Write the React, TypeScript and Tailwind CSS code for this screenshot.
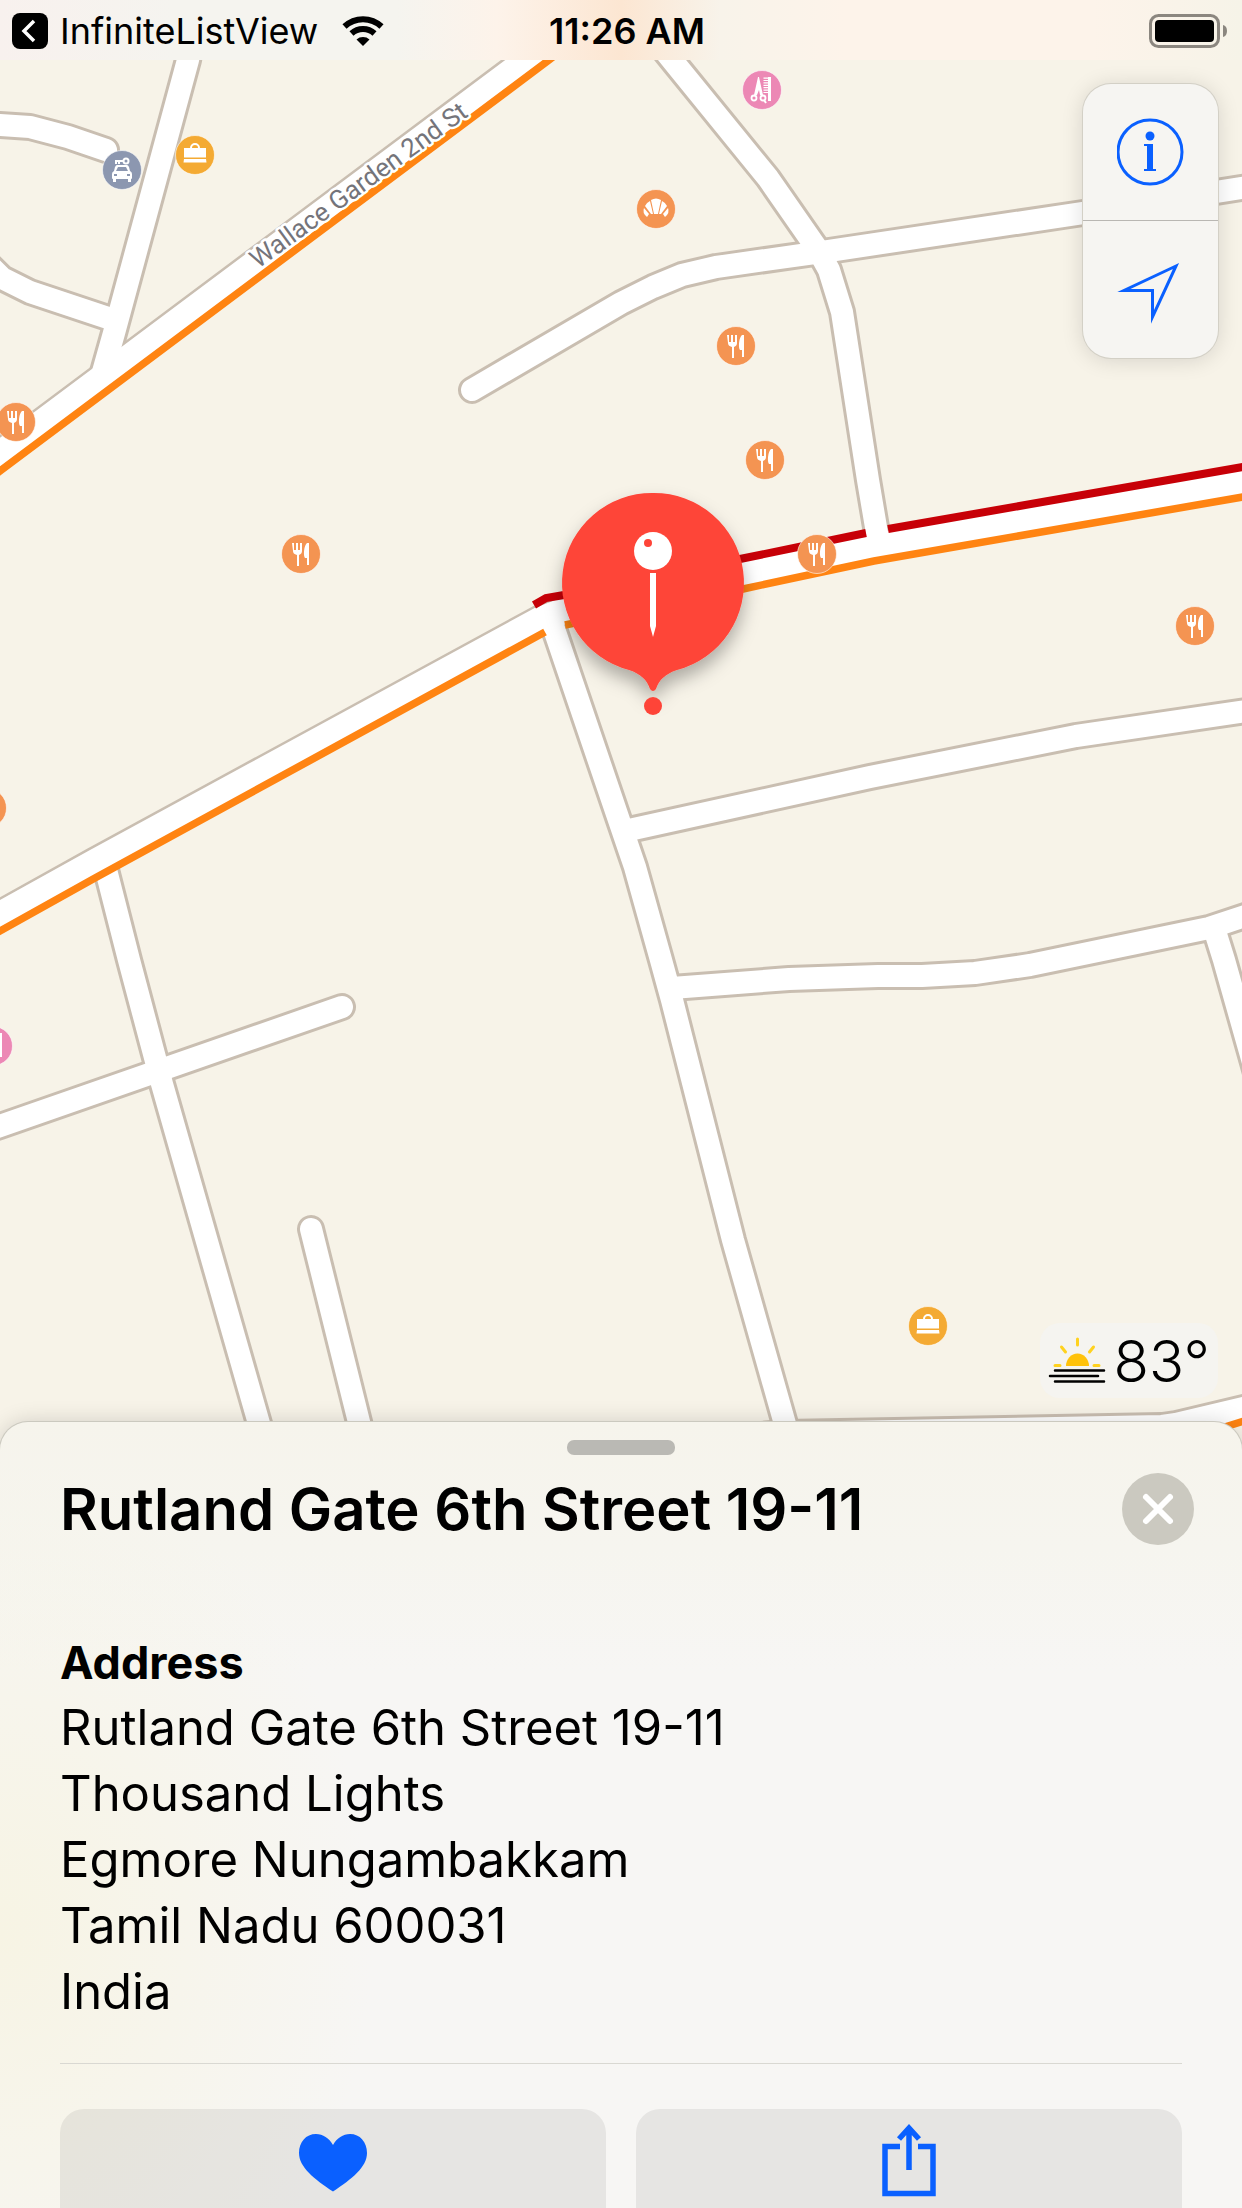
import type { ReactNode } from "react";

const MINOR_ROADS = [
  "M192 40 L188 60 L114 333 L103 372",
  "M-20 124 L0 125 L30 127 L68 137 L106 150",
  "M-14 262 L2 278 L30 292 L108 318",
  "M472 390 L621 303 L653 287 L682 275 L716 267 L822 252 L1083 213 L1260 185",
  "M656 40 L672 60 L768 178 L818 250 L829 270 L842 312 L868 480 L879 545",
  "M551 620 L621 826 L635 867 L661 960 L672 1000 L733 1240 L785 1424 L790 1450",
  "M629 830 L870 777 L1076 736 L1260 709",
  "M672 988 L789 979 L878 976 L922 976 L975 973 L1030 965 L1209 928 L1260 911",
  "M1214 928 L1224 960 L1258 1080",
  "M104 862 L129 960 L162 1084 L262 1434",
  "M-20 1133 L0 1126 L342 1007",
  "M311 1229 L362 1434",
  "M700 1440 L785 1433 L1162 1426 L1176 1424 L1260 1404",
];

const MAIN_ROADS = [
  "M-20 469 L0 454 L527 60 L560 35",
  "M-20 926 L0 915 L95 862 L540 620 L566 610 L743 574 L870 547 L1260 479",
];

type PoiKind = "food" | "bag" | "salon" | "bakery" | "car";

const POIS: { kind: PoiKind; x: number; y: number }[] = [
  { kind: "car", x: 122, y: 170 },
  { kind: "bag", x: 195, y: 155 },
  { kind: "food", x: 16, y: 422 },
  { kind: "salon", x: 762, y: 90 },
  { kind: "bakery", x: 656, y: 209 },
  { kind: "food", x: 736, y: 346 },
  { kind: "food", x: 765, y: 460 },
  { kind: "food", x: 301, y: 554 },
  { kind: "food", x: 817, y: 554 },
  { kind: "food", x: 1195, y: 626 },
  { kind: "food", x: -13, y: 808 },
  { kind: "salon", x: -7, y: 1046 },
  { kind: "bag", x: 928, y: 1326 },
];

const POI_COLORS: Record<PoiKind, string> = {
  food: "#f49452",
  bakery: "#f49452",
  bag: "#f4aa33",
  salon: "#ec88b5",
  car: "#8c97b0",
};

const POI_GLYPHS: Record<PoiKind, ReactNode> = {
  food: (
    <g fill="#fff">
      <path d="M-9-11h2v7h2v-7h2v7h2v-7h2v8c0 2-1 3-3 4v11h-2v-11c-3-1-4-2-4-4z" />
      <path d="M8-11V11H6V4H4C2 2 3-9 6-11z" />
    </g>
  ),
  bag: (
    <g fill="#fff">
      <path d="M-11-7h22v9.500h-22zM-11 4h22l.5 3.500h-23z" />
      <path d="M-4-6v-1a4 4 0 0 1 8 0v1" fill="none" stroke="#fff" strokeWidth="2" />
    </g>
  ),
  salon: (
    <g fill="none" stroke="#fff">
      <path d="M-4-13h1L1 5H-2L-3 0-5 5H-8z" fill="#fff" stroke="none" />
      <circle cx="-8" cy="8" r="2.500" strokeWidth="1.800" />
      <circle cx="1" cy="8" r="2.500" strokeWidth="1.800" />
      <path d="M2 10l2 3" strokeWidth="2" />
      <path d="M7.500-13v24" strokeWidth="3" />
      <path d="M4-12.500V3" strokeWidth="5" strokeDasharray="1.200 1.200" />
    </g>
  ),
  bakery: (
    <g fill="#fff">
      <path d="M-5-9q5-3 10 0L2 5h-4z" />
      <path d="M-6-8-3 5h-2L-11-3q1-3 5-5z" />
      <path d="M6-8 3 5h2L11-3q-1-3-5-5z" />
      <path d="M-12-1-7 5l-2 3q-5-4-3-9z" />
      <path d="M12-1 7 5l2 3q5-4 3-9z" />
    </g>
  ),
  car: (
    <g fill="#fff">
      <path
        fillRule="evenodd"
        d="M-5-5H5q1 0 2 2l1 4q2 1 2 3v4q0 1-1 1v3H6V9H-6v3h-3V9q-1 0-1-1V4q0-2 2-3l1-4q1-2 2-2zM-4-3-6 1H6L4-3zM-8 4v2h3V4zM5 4v2h3V4z"
      />
      <path d="M-7-10H2v2H-2v2h-2v-2h-1v2h-2z" />
      <circle cx="4" cy="-9" r="2.500" fill="none" stroke="#fff" strokeWidth="2" />
    </g>
  ),
};

function MapCanvas() {
  return (
    <svg
      className="absolute inset-0 h-full w-full"
      viewBox="0 0 1242 2208"
      preserveAspectRatio="xMidYMin slice"
      role="img"
      aria-label="Map of Rutland Gate 6th Street"
    >
      <defs>
        <filter id="pin-shadow" x="-40%" y="-40%" width="180%" height="180%">
          <feDropShadow dx="0" dy="10" stdDeviation="9" floodColor="#000" floodOpacity="0.3" />
        </filter>
      </defs>
      <rect width="1242" height="2208" fill="#f7f3e8" />
      <g fill="none" strokeLinecap="round" strokeLinejoin="round">
        <g stroke="#c9beb1" strokeWidth="28">
          {MINOR_ROADS.map((d) => (
            <path key={d} d={d} />
          ))}
        </g>
        <g stroke="#c9beb1" strokeWidth="31">
          {MAIN_ROADS.map((d) => (
            <path key={d} d={d} />
          ))}
        </g>
        <g stroke="#fff" strokeWidth="26">
          {MAIN_ROADS.map((d) => (
            <path key={d} d={d} />
          ))}
        </g>
        <g stroke="#fff" strokeWidth="22">
          {MINOR_ROADS.map((d) => (
            <path key={d} d={d} />
          ))}
        </g>
      </g>
      <g fill="none" stroke="#ff8412" strokeWidth="7.500">
        <path d="M-20 486 L0 471 L549 60 L575 40" />
        <path d="M-20 942 L0 931 L95 878 L545 632" />
        <path d="M565 625 L743 589 L874 561 L1260 494" />
        <path d="M1196 1436 L1260 1416" />
      </g>
      <g fill="none" stroke="#c70007" strokeWidth="8">
        <path d="M534 605 L546 598 L564 595 L740 559 L866 533" />
        <path d="M888 529 L1260 464" />
      </g>
      <text
        transform="translate(258 269) rotate(-36)"
        fontFamily="Roboto, sans-serif"
        fontSize="26"
        fill="#74747a"
        stroke="#fff"
        strokeWidth="5"
        strokeLinejoin="round"
        paintOrder="stroke"
      >
        Wallace Garden 2nd St
      </text>
      {POIS.map(({ kind, x, y }) => (
        <g key={`${x}-${y}`} transform={`translate(${x} ${y})`}>
          <circle r="19.500" fill={POI_COLORS[kind]} stroke="#fff" strokeOpacity="0.6" />
          {POI_GLYPHS[kind]}
        </g>
      ))}
      <path
        filter="url(#pin-shadow)"
        fill="#fe4438"
        d="M653 493a90 90 0 0 1 24 177c-12 4-18 10-21 19q-3 4-6 0c-3-9-9-15-21-19A90 90 0 0 1 653 493z"
      />
      <circle cx="653" cy="706" r="9" fill="#fe4438" />
      <circle cx="653" cy="551" r="19" fill="#fff" />
      <circle cx="648" cy="543" r="4" fill="#fe4438" />
      <path d="M650 573h6v53l-3 11-3-11z" fill="#fff" />
    </svg>
  );
}

function StatusBar() {
  return (
    <header className="relative grid h-[60px] shrink-0 grid-cols-[1fr_auto_1fr] items-center bg-[linear-gradient(90deg,#f8f1ee_0%,#f5f4ef_14%,#f5f4ef_32%,#fdf3ea_40%,#fce6d2_50%,#f8f3ea_58%,#fdf3ea_68%,#fdf3ea_88%,#f6f3e8_100%)] pl-3 pt-[2px] text-[36px] leading-[44px]">
      <button type="button" className="flex items-center gap-3 justify-self-start whitespace-nowrap">
        <svg className="h-9 w-9" viewBox="0 0 36 36" aria-hidden="true">
          <rect width="36" height="36" rx="8" fill="#000" />
          <path d="M22 8 12 18l10 10" fill="none" stroke="#fff" strokeWidth="3.500" />
        </svg>
        <span>InfiniteListView</span>
        <svg className="ml-3 h-8 w-[42px]" viewBox="0 0 42 32" aria-hidden="true">
          <g fill="none" stroke="#000" strokeWidth="6">
            <path d="M2.500 11.500a27 27 0 0 1 37 0" />
            <path d="M9.500 18.500a17 17 0 0 1 23 0" />
          </g>
          <path d="M14.500 24.500a10 10 0 0 1 13 0L21 31z" />
        </svg>
      </button>
      <time className="font-semibold">11:26 AM</time>
      <svg className="mr-[15px] h-[34px] w-[78px] justify-self-end" viewBox="0 0 78 34" role="img" aria-label="Battery full">
        <rect x="1.500" y="1.500" width="68" height="31" rx="8" fill="none" stroke="#8b867f" strokeWidth="3" />
        <rect x="6" y="6" width="59" height="22" rx="4" />
        <path d="M74 11q4 1 4 6t-4 6z" fill="#8b867f" />
      </svg>
    </header>
  );
}

function MapControls() {
  return (
    <div className="flex w-[135px] flex-col divide-y divide-[#b9b7b3] rounded-[28px] bg-[#f6f5f2] shadow-[0_0_0_1px_#d3d0c6,0_2px_22px_rgba(0,0,0,0.14)]">
      <button type="button" aria-label="Map settings" className="flex h-[137px] items-center justify-center">
        <svg className="h-[68px] w-[68px]" viewBox="0 0 68 68" fill="#0a60ff" aria-hidden="true">
          <circle cx="33" cy="34" r="32" fill="none" stroke="#0a60ff" strokeWidth="3" />
          <circle cx="33" cy="18" r="4.500" />
          <path d="M27 26h9v25h3v2H27v-2h3V28h-3z" />
        </svg>
      </button>
      <button type="button" aria-label="Show my location" className="flex h-[137px] items-center justify-center">
        <svg className="h-[68px] w-[68px]" viewBox="0 0 68 68" aria-hidden="true">
          <path d="M59 10 7 34.500H35.500V61z" fill="none" stroke="#0a60ff" strokeWidth="3" strokeMiterlimit="10" />
        </svg>
      </button>
    </div>
  );
}

function Weather() {
  return (
    <div className="flex h-[75px] items-center gap-2 rounded-[20px] bg-[#f5f4f0] px-2">
      <svg className="h-[50px] w-[58px]" viewBox="1 0 58 50" role="img" aria-label="Sunset">
        <path d="M19 30a11.500 12.500 0 0 1 23 0z" fill="#ffc20a" />
        <path
          d="M30.500 3v6M14.500 11l4 5M46.500 11l-4 5M8 29.500h5M47 29.500h5"
          stroke="#ffd21f"
          strokeWidth="3"
          strokeLinecap="round"
        />
        <path d="M8 34.500h49M3 40h48M8 45.500h49" stroke="#000" strokeWidth="2.500" strokeLinecap="round" />
      </svg>
      <span className="text-[58px] font-light leading-[72px]">83°</span>
    </div>
  );
}

const ADDRESS_LINES = [
  "Rutland Gate 6th Street 19-11",
  "Thousand Lights",
  "Egmore Nungambakkam",
  "Tamil Nadu 600031",
  "India",
];

function PlaceSheet() {
  return (
    <section className="relative flex shrink-0 flex-col rounded-t-[28px] bg-[#f7f6f4] bg-[radial-gradient(ellipse_30%_60%_at_0%_65%,#f7f4e4,transparent),linear-gradient(180deg,#f6f4ec_0%,#f6f5ef_16%,transparent_32%)] px-[60px] shadow-[0_0_0_1px_#cbc9bf,0_0_22px_rgba(0,0,0,0.16)]">
      <div className="mt-[18px] h-[15px] w-[108px] self-center rounded-[7px] bg-[#bab9b4]" />
      <div className="-mr-3 mt-[18px] flex items-center justify-between">
        <h1 className="text-[58px] font-semibold leading-[72px]">Rutland Gate 6th Street 19-11</h1>
        <button type="button" aria-label="Close">
          <svg className="h-[72px] w-[72px]" viewBox="0 0 72 72" aria-hidden="true">
            <circle cx="36" cy="36" r="36" fill="#cbc9c0" />
            <path d="M24 24l24 24M48 24 24 48" stroke="#fff" strokeWidth="6" strokeLinecap="round" />
          </svg>
        </button>
      </div>
      <h2 className="mb-[2px] mt-[88px] text-[45px] font-bold leading-[60px]">Address</h2>
      <address className="text-[49px] not-italic leading-[66px]">
        {ADDRESS_LINES.map((line) => (
          <div key={line}>{line}</div>
        ))}
      </address>
      <hr className="mt-[38px] border-t border-[#d9d8d2]" />
      <div className="mt-[45px] grid grid-cols-2 gap-[30px]">
        <button
          type="button"
          aria-label="Add to favorites"
          className="flex h-[99px] justify-center rounded-t-[24px] bg-black/[0.065] pt-6"
        >
          <svg className="h-[60px] w-[70px]" viewBox="0 0 70 60" fill="#0a60ff" aria-hidden="true">
            <path d="M35 58.500C16 46 1 34 1 20 1 9 8 1 18 1c7 0 13 4 17 11C39 5 45 1 52 1c10 0 17 8 17 19 0 14-15 26-34 38.500z" />
          </svg>
        </button>
        <button
          type="button"
          aria-label="Share"
          className="flex h-[99px] justify-center rounded-t-[24px] bg-black/[0.065] pt-[14px]"
        >
          <svg className="h-[75px] w-[54px]" viewBox="0 0 54 75" fill="none" stroke="#0a60ff" strokeWidth="5.500" aria-hidden="true">
            <path d="M18 23.500H3V70.500H51V23.500H36" />
            <path d="M27 47V6M17 16 27 5 37 16" />
          </svg>
        </button>
      </div>
    </section>
  );
}

export default function App() {
  return (
    <div className="relative flex min-h-screen flex-col overflow-hidden bg-[#f7f3e8] font-['Inter','Liberation_Sans',sans-serif] text-black">
      <MapCanvas />
      <StatusBar />
      <main className="relative flex flex-1 flex-col items-end justify-between p-6">
        <MapControls />
        <Weather />
      </main>
      <PlaceSheet />
    </div>
  );
}
